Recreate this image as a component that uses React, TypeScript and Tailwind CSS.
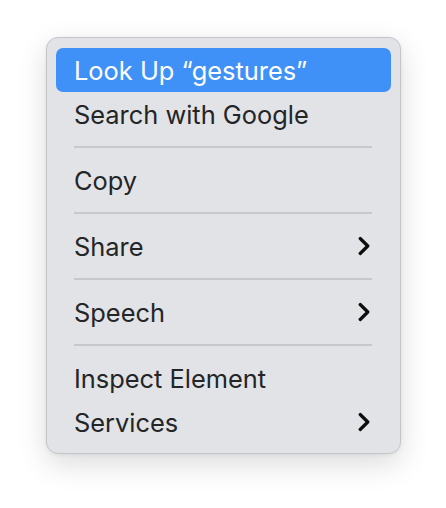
import React from "react";

const Chevron = () => (
  <svg width="12" height="20" viewBox="0 0 12 20" fill="none" className="shrink-0">
    <path d="M2.2 2.5 L9.8 10 L2.2 17.5" stroke="#0d0d0d" strokeWidth="3.2" strokeLinecap="round" strokeLinejoin="round" />
  </svg>
);

type Item = { label: string; sub?: boolean; active?: boolean } | "sep";

const items: Item[] = [
  { label: "Look Up \u201Cgestures\u201D", active: true },
  { label: "Search with Google" },
  "sep",
  { label: "Copy" },
  "sep",
  { label: "Share", sub: true },
  "sep",
  { label: "Speech", sub: true },
  "sep",
  { label: "Inspect Element" },
  { label: "Services", sub: true },
];

export default function App() {
  return (
    <div
      className="w-[446px] h-[508px] bg-white pl-[46px] pt-[37px]"
      style={{ fontFamily: "Inter, 'Noto Sans', 'Liberation Sans', sans-serif" }}
    >
      <div className="w-[355px] rounded-[12px] border border-[#c4c5c8] bg-[#e1e3e6] px-[9px] pt-[10px] pb-[9px] shadow-[0_10px_30px_rgba(0,0,0,0.14),0_1px_4px_rgba(0,0,0,0.06)]">
        {items.map((it, i) =>
          it === "sep" ? (
            <div key={i} className="h-[22px] flex items-center pl-[18px] pr-[19px]">
              <div className="h-[2px] w-full bg-[#c6c8cc]" />
            </div>
          ) : (
            <div
              key={i}
              className={
                "h-[44px] flex items-center justify-between pl-[18px] pr-[21px] rounded-[7px] text-[25.4px] leading-none " +
                (it.active ? "bg-[#3f91f8] text-white" : "text-[#242527]")
              }
            >
              <span className="pt-[1px]">{it.label}</span>
              {it.sub ? <Chevron /> : null}
            </div>
          )
        )}
      </div>
    </div>
  );
}
